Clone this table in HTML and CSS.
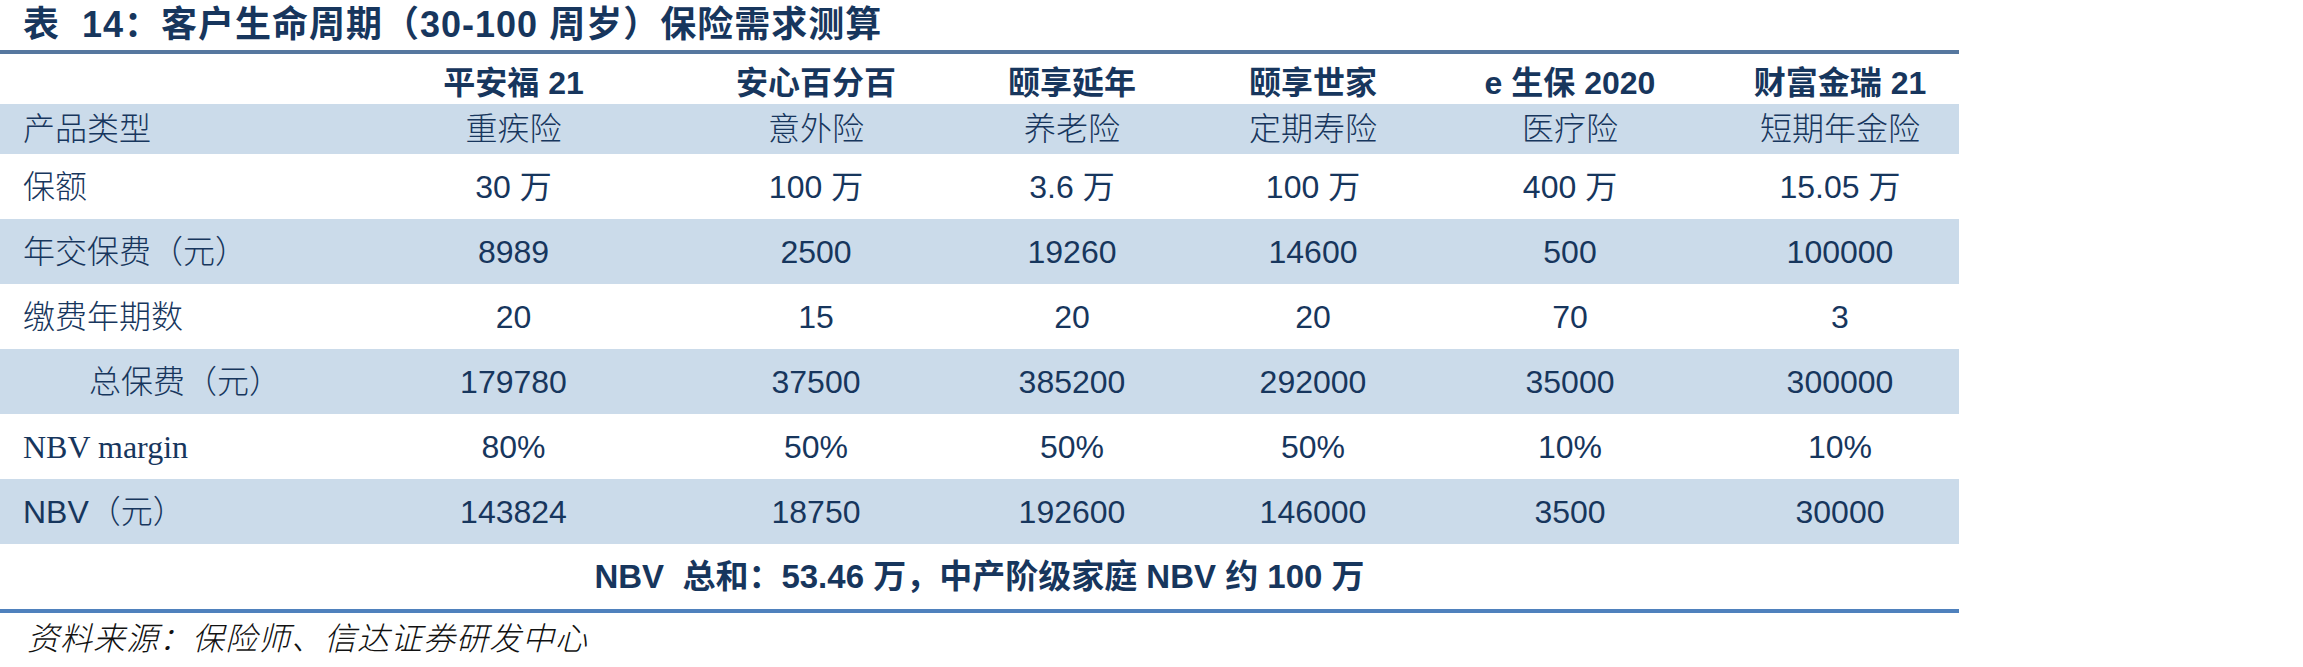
FILE: index.html
```html
<!DOCTYPE html>
<html lang="zh-CN">
<head>
<meta charset="utf-8">
<title>客户生命周期保险需求测算</title>
<link rel="stylesheet" href="styles.css">
</head>
<body>
<div class="page">
  <h1 class="title">表&nbsp; 14：客户生命周期（30-100 周岁）保险需求测算</h1>
  <div class="table">
    <div class="row head">
      <div class="cell label"></div>
      <div class="cell">平安福 21</div>
      <div class="cell">安心百分百</div>
      <div class="cell">颐享延年</div>
      <div class="cell">颐享世家</div>
      <div class="cell">e 生保 2020</div>
      <div class="cell">财富金瑞 21</div>
    </div>
    <div class="row short shaded">
      <div class="cell label cjk">产品类型</div>
      <div class="cell cjk">重疾险</div>
      <div class="cell cjk">意外险</div>
      <div class="cell cjk">养老险</div>
      <div class="cell cjk">定期寿险</div>
      <div class="cell cjk">医疗险</div>
      <div class="cell cjk">短期年金险</div>
    </div>
    <div class="row">
      <div class="cell label cjk">保额</div>
      <div class="cell">30 万</div>
      <div class="cell">100 万</div>
      <div class="cell">3.6 万</div>
      <div class="cell">100 万</div>
      <div class="cell">400 万</div>
      <div class="cell">15.05 万</div>
    </div>
    <div class="row shaded">
      <div class="cell label cjk">年交保费（元）</div>
      <div class="cell">8989</div>
      <div class="cell">2500</div>
      <div class="cell">19260</div>
      <div class="cell">14600</div>
      <div class="cell">500</div>
      <div class="cell">100000</div>
    </div>
    <div class="row">
      <div class="cell label cjk">缴费年期数</div>
      <div class="cell">20</div>
      <div class="cell">15</div>
      <div class="cell">20</div>
      <div class="cell">20</div>
      <div class="cell">70</div>
      <div class="cell">3</div>
    </div>
    <div class="row shaded">
      <div class="cell label cjk indent">总保费（元）</div>
      <div class="cell">179780</div>
      <div class="cell">37500</div>
      <div class="cell">385200</div>
      <div class="cell">292000</div>
      <div class="cell">35000</div>
      <div class="cell">300000</div>
    </div>
    <div class="row">
      <div class="cell label serif">NBV margin</div>
      <div class="cell">80%</div>
      <div class="cell">50%</div>
      <div class="cell">50%</div>
      <div class="cell">50%</div>
      <div class="cell">10%</div>
      <div class="cell">10%</div>
    </div>
    <div class="row shaded">
      <div class="cell label">NBV<span class="cjk">（元）</span></div>
      <div class="cell">143824</div>
      <div class="cell">18750</div>
      <div class="cell">192600</div>
      <div class="cell">146000</div>
      <div class="cell">3500</div>
      <div class="cell">30000</div>
    </div>
    <div class="row summary">
      <div class="cell">NBV&nbsp; 总和：53.46 万，中产阶级家庭 NBV 约 100 万</div>
    </div>
  </div>
  <p class="source">资料来源：保险师、信达证券研发中心</p>
</div>
</body>
</html>
```

FILE: styles.css
```css
body {
  margin: 0;
  background: #ffffff;
}

.page {
  width: 2303px;
}

.title {
  margin: 0;
  height: 50px;
  padding-left: 23px;
  font-family: "Liberation Sans", "Noto Sans CJK SC", sans-serif;
  font-size: 36px;
  font-weight: bold;
  line-height: 50px;
  letter-spacing: 1px;
  color: #17365d;
  white-space: nowrap;
}

.table {
  width: 1959px;
  border-top: 4px solid #56779f;
  border-bottom: 4px solid #4f81bd;
}

.row {
  display: grid;
  grid-template-columns: 332px 363px 242px 270px 212px 302px 238px;
  height: 65px;
  align-items: center;
}

.row.short {
  height: 50px;
}

.row.head {
  padding-top: 8px;
  height: 42px;
}

.shaded {
  background: #cbdbea;
}

.cell {
  text-align: center;
  font-family: "Liberation Sans", "Noto Sans CJK SC", sans-serif;
  font-size: 32px;
  line-height: 40px;
  color: #17365d;
  white-space: nowrap;
}

.head .cell {
  font-weight: bold;
}

.cjk {
  font-weight: 300;
}

.label {
  text-align: left;
  padding-left: 23px;
}

.label.indent {
  padding-left: 89px;
}

.serif {
  font-family: "Liberation Serif", "Noto Sans CJK SC", serif;
}

.summary {
  grid-template-columns: 1fr;
}

.summary .cell {
  font-size: 33px;
  font-weight: bold;
}

.source {
  margin: 0;
  padding-left: 27px;
  font-family: "Noto Sans CJK SC", sans-serif;
  font-size: 32px;
  font-style: italic;
  font-weight: 300;
  line-height: 46px;
  letter-spacing: 1px;
  color: #111111;
  white-space: nowrap;
}
```
